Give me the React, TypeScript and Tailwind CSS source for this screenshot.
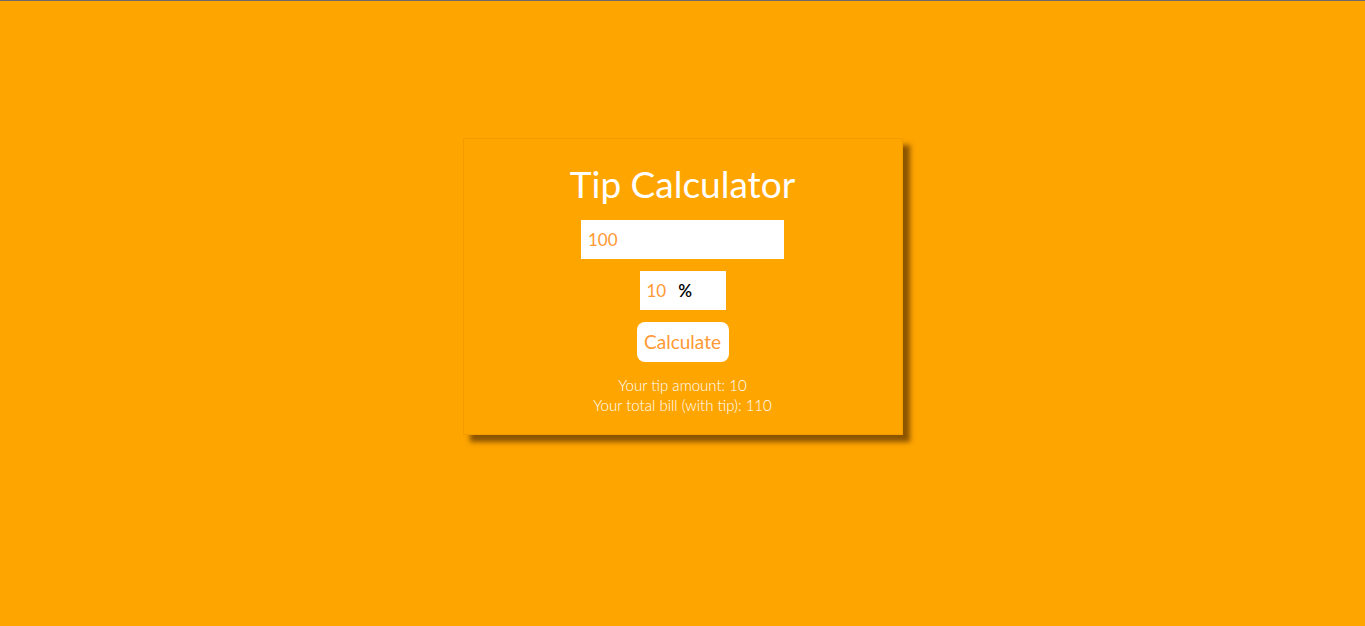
import React from "react";

export default function App() {
  return (
    <div
      className="w-full h-[626px] bg-[#ffa500] border-t border-[#6b6b6b] flex justify-center"
      style={{ fontFamily: '"Source Sans Pro", Lato, "Noto Sans", sans-serif' }}
    >
      <div className="mt-[137px] w-[440px] h-[297px] bg-[#ffa500] border border-[#f29c00] shadow-[7px_7px_5px_rgba(90,50,0,0.7)] flex flex-col items-center">
        <h1 className="mt-[20px] text-[37px] leading-[50px] text-white font-normal">Tip Calculator</h1>
        <div className="mt-[11px] w-[203px] h-[39px] bg-white flex items-center px-[7px] text-[17px] text-[#ff9933]">100</div>
        <div className="mt-[12px] w-[86px] h-[39px] bg-white flex items-center px-[7px] text-[17px]">
          <span className="text-[#ff9933]">10</span>
          <span className="ml-[12px] text-black font-semibold">%</span>
        </div>
        <div className="mt-[12px] w-[92px] h-[40px] bg-white rounded-[8px] flex items-center justify-center text-[19px] text-[#ff9933]">
          Calculate
        </div>
        <div className="mt-[13px] text-[15px] leading-[20px] text-white text-center font-light">
          <div>Your tip amount: 10</div>
          <div>Your total bill (with tip): 110</div>
        </div>
      </div>
    </div>
  );
}
